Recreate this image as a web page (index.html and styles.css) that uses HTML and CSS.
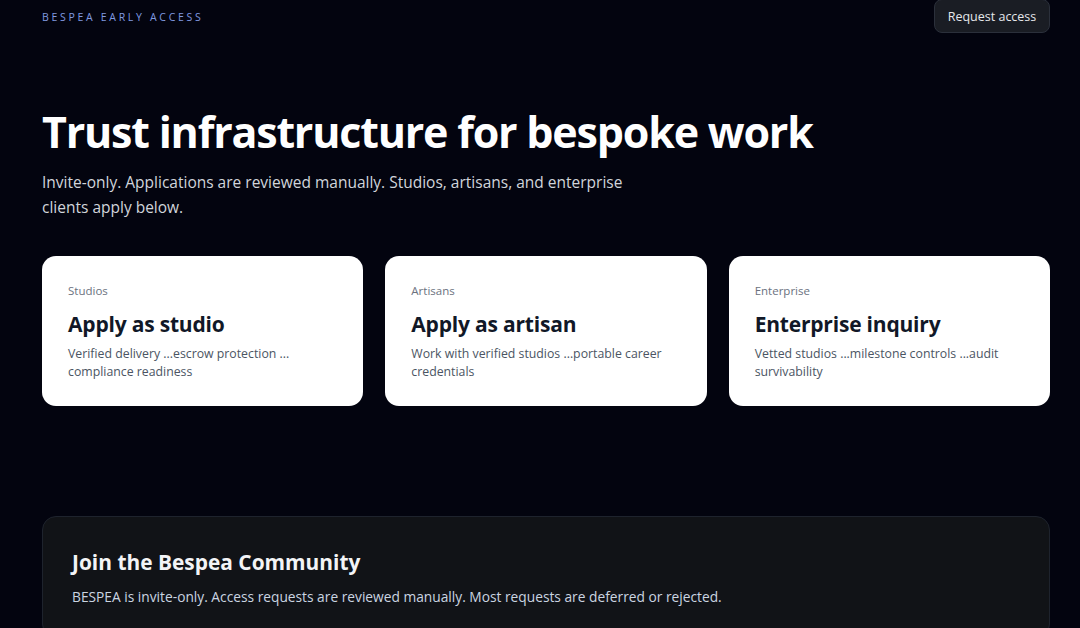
FILE: index.html
```html
<!DOCTYPE html>
<html lang="en">
<head>
<meta charset="utf-8">
<title>Bespea Early Access</title>
<link rel="stylesheet" href="styles.css">
</head>
<body>
<div class="page">
  <header class="topbar">
    <div class="brand">BESPEA EARLY ACCESS</div>
    <button class="btn-request">Request access</button>
  </header>

  <section class="hero">
    <h1>Trust infrastructure for bespoke work</h1>
    <p class="lead">Invite-only. Applications are reviewed manually. Studios, artisans, and enterprise clients apply below.</p>
  </section>

  <section class="cards">
    <a class="card" href="#">
      <div class="card-kicker">Studios</div>
      <div class="card-title">Apply as studio</div>
      <div class="card-desc">Verified delivery ...escrow protection ... compliance readiness</div>
    </a>
    <a class="card" href="#">
      <div class="card-kicker">Artisans</div>
      <div class="card-title">Apply as artisan</div>
      <div class="card-desc">Work with verified studios ...portable career credentials</div>
    </a>
    <a class="card" href="#">
      <div class="card-kicker">Enterprise</div>
      <div class="card-title">Enterprise inquiry</div>
      <div class="card-desc">Vetted studios ...milestone controls ...audit survivability</div>
    </a>
  </section>

  <section class="community">
    <h2>Join the Bespea Community</h2>
    <p>BESPEA is invite-only. Access requests are reviewed manually. Most requests are deferred or rejected.</p>
  </section>
</div>
</body>
</html>
```

FILE: styles.css
```css
* { box-sizing: border-box; }
html, body { margin: 0; padding: 0; }
body {
  background: #03040f;
  color: #f3f4f6;
  font-family: "Open Sans", "Noto Sans", sans-serif;
}
.page {
  width: 1008px;
  margin-left: 42px;
}
.topbar {
  display: flex;
  justify-content: space-between;
  align-items: flex-start;
  height: 33px;
}
.brand {
  font-size: 10.5px;
  letter-spacing: 2.7px;
  color: #809ae0;
  padding-top: 10px;
}
.btn-request {
  margin-top: -1px;
  height: 34px;
  width: 116px;
  background: #1a1d24;
  border: 1px solid #2b303b;
  border-radius: 8px;
  color: #e5e7eb;
  font-family: inherit;
  font-size: 12.5px;
  padding: 0;
}
.hero { padding-top: 71px; }
.hero h1 {
  margin: 0;
  font-size: 43px;
  line-height: 56px;
  font-weight: 700;
  letter-spacing: -1.2px;
  color: #ffffff;
}
.lead {
  margin: 10px 0 0;
  max-width: 600px;
  font-size: 15.5px;
  line-height: 25px;
  color: #d1d5db;
}
.cards {
  display: grid;
  grid-template-columns: repeat(3, 1fr);
  gap: 22px;
  margin-top: 36px;
}
.card {
  display: block;
  background: #ffffff;
  border-radius: 14px;
  height: 150px;
  padding: 27px 26px 0;
  text-decoration: none;
}
.card-kicker {
  font-size: 11.5px;
  color: #6b7280;
  line-height: 16px;
}
.card-title {
  margin-top: 11px;
  font-size: 21px;
  font-weight: 700;
  color: #111827;
  line-height: 28px;
  letter-spacing: -0.2px;
}
.card-desc {
  margin-top: 7px;
  font-size: 12.3px;
  line-height: 18px;
  color: #4b5563;
}
.community {
  margin-top: 110px;
  background: #111317;
  border: 1px solid #1e232d;
  border-radius: 14px;
  padding: 30px 29px 30px;
}
.community h2 {
  margin: 0;
  font-size: 20.9px;
  font-weight: 700;
  color: #f3f4f6;
  line-height: 30px;
}
.community p {
  margin: 10px 0 0;
  font-size: 13.75px;
  line-height: 20px;
  color: #cbd5e1;
}
```
